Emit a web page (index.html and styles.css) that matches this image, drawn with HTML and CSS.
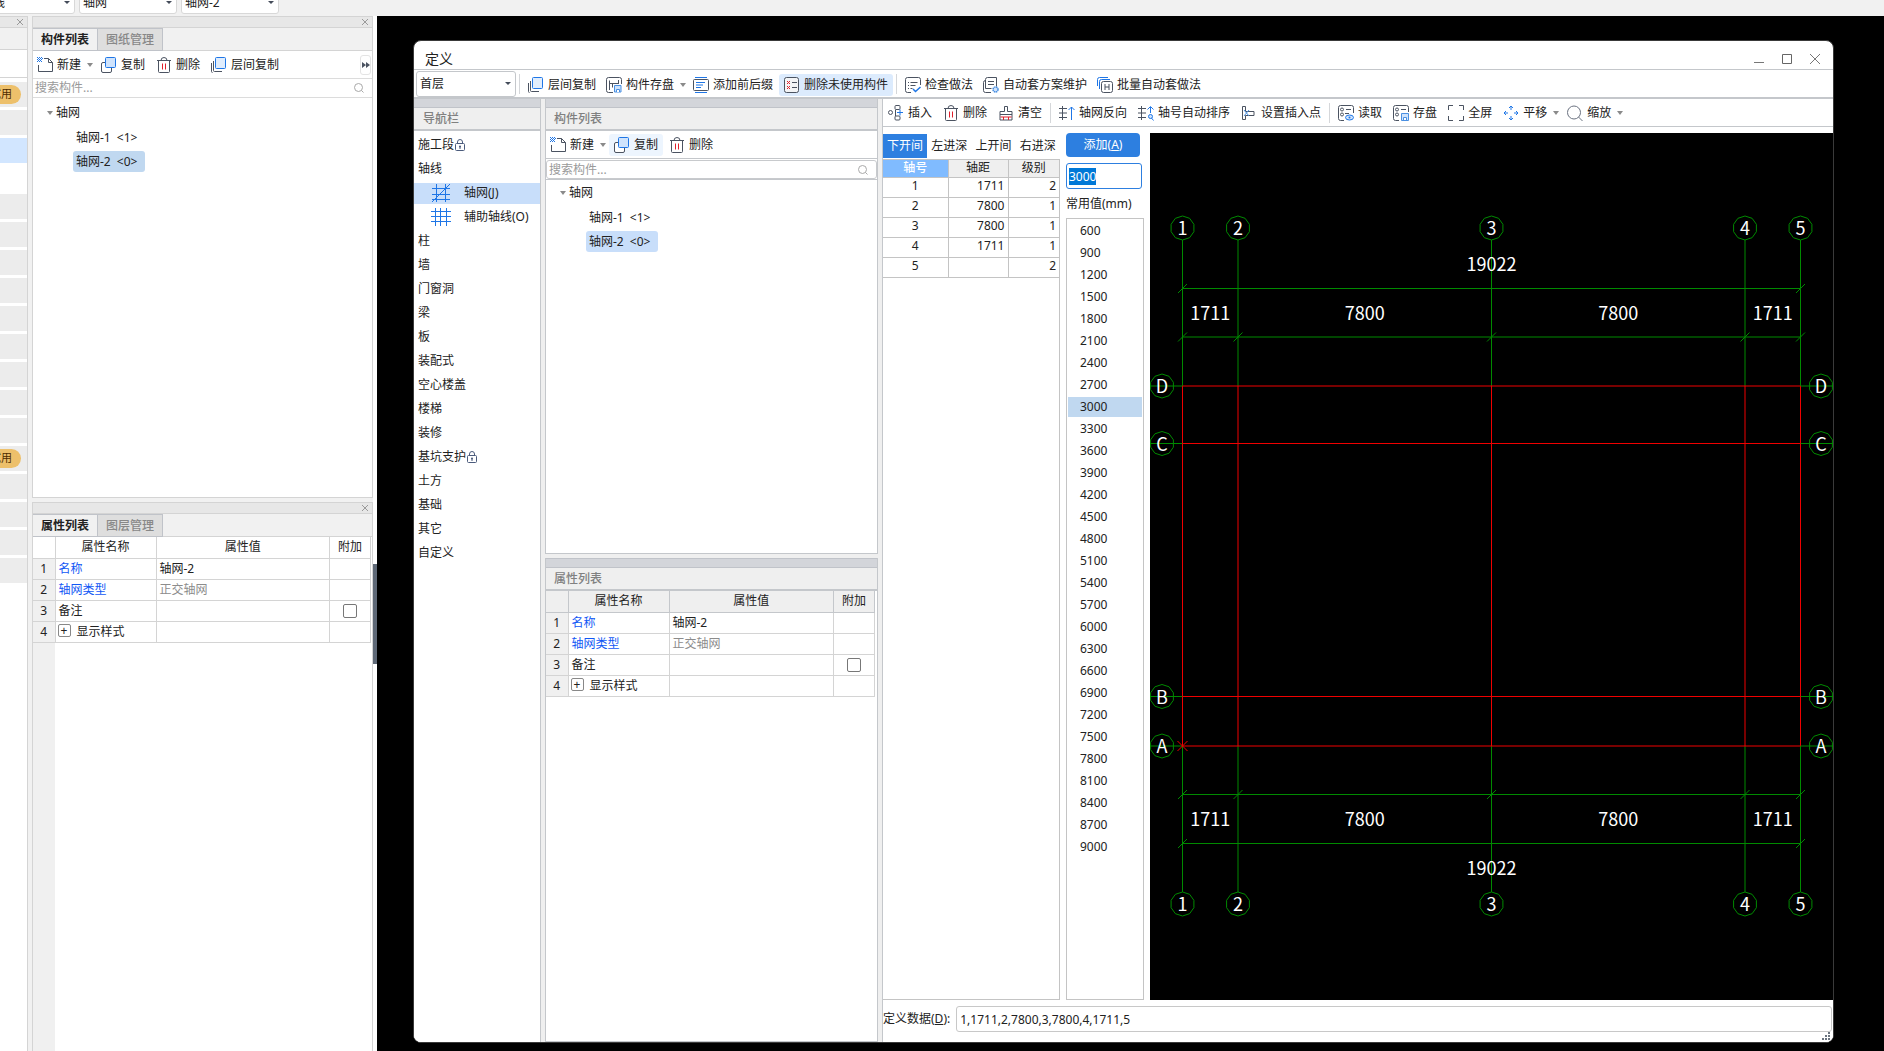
FILE: index.html
```html
<!DOCTYPE html>
<html lang="zh-CN">
<head>
  <meta charset="UTF-8" />
  <meta name="viewport" content="width=device-width, initial-scale=1.0"/>
  <title>定义</title>
  <link rel="stylesheet" href="styles.css">
</head>
<body>
  <!-- icon set -->
  <svg class="sprite" aria-hidden="true">
    <symbol id="i-new" viewBox="0 0 16 16">
      <path d="M7 1.5h4.5l4 4v9h-14V8M11.5 1.5v4h4" fill="none" stroke="#4b5361"/>
      <path d="M0 .5h5M0 2.500h5M0 4.500h5" stroke="#1f76e6" stroke-dasharray="1 1"/>
      <path d="M1 1.500h5M1 3.500h4" stroke="#1f76e6" stroke-dasharray="1 1"/>
    </symbol>
    <symbol id="i-copy" viewBox="0 0 16 16">
      <rect x=".5" y="5.500" width="10" height="10" rx="1.500" fill="#fff" stroke="#4b5361"/>
      <rect x="4.500" y=".5" width="10" height="10" rx="1" fill="#cfe3fc" stroke="#1f76e6"/>
    </symbol>
    <symbol id="i-layers" viewBox="0 0 16 16">
      <path d="M.5 6v8.500q0 1 1 1M2.500 4v9.500q0 1 1 1H11" fill="none" stroke="#4b5361"/>
      <rect x="4.500" y=".5" width="10" height="11" rx="1" fill="#e0edfd" stroke="#1f76e6"/>
    </symbol>
    <symbol id="i-del" viewBox="0 0 16 16">
      <path d="M1 3.500h14M2.500 3.500v11q0 1 1 1h9q1 0 1-1v-11M5 3.500q0-3 3-3t3 3" fill="none" stroke="#4b5361"/>
      <path d="M6.500 6.500v6M9.500 6.500v6" stroke="#e0202c"/>
    </symbol>
    <symbol id="i-save" viewBox="0 0 16 16">
      <path d="M7 15.500H2.500q-2 0-2-2v-11q0-2 2-2h11q2 0 2 2V7M3.500 13V3.500M3.500 6.500h9M12.500 3v4M6.500 6.500v4" fill="none" stroke="#4b5361"/>
      <path d="M8.500 8.500h6.500v6.500H8.500z" fill="#cfe3fc" stroke="#4a90e2"/>
      <path d="M10.500 15v-2.500h3V15" fill="#fff" stroke="#4a90e2"/>
    </symbol>
    <symbol id="i-affix" viewBox="0 0 16 16">
      <path d="M2 .5h12M2 15.500h12" stroke="#1f76e6"/>
      <rect x=".5" y="2.500" width="15" height="11" rx="1" fill="#fff" stroke="#4b5361"/>
      <path d="M3 5.500h9M3 8h7M3 10.500h5" stroke="#1f76e6"/>
    </symbol>
    <symbol id="i-unused" viewBox="0 0 16 16">
      <rect x=".5" y=".5" width="14" height="15" rx="2" fill="#f3f4f6" stroke="#4b5361"/>
      <path d="M3 4l3 3M6 4L3 7M3 9l3 3M6 9l-3 3" stroke="#e0202c"/>
      <path d="M8 5.500h5M8 10.500h5" stroke="#4b5361"/>
    </symbol>
    <symbol id="i-check" viewBox="0 0 16 16">
      <path d="M6 15.500H2.500q-2 0-2-2v-11q0-2 2-2h11q2 0 2 2V8M3 5.500h1M5.500 5.500h7M3 8.500h1M5.500 8.500h5M3 11.500h1M5.500 11.500h2" fill="none" stroke="#4b5361"/>
      <path d="M8 12l2.500 2.500L15.500 10" fill="none" stroke="#1f76e6" stroke-width="1.500"/>
    </symbol>
    <symbol id="i-plan" viewBox="0 0 16 16">
      <path d="M2.500 3.500q-2 0-2 2v8q0 2 2 2H8M2.500 11.500v-9q0-2 2-2h9v9" fill="none" stroke="#4b5361"/>
      <path d="M5 4.500h6M5 7.500h6M2.500 11.500h6" stroke="#4b5361"/>
      <circle cx="12.500" cy="12.500" r="2.500" fill="#cfe3fc" stroke="#4a90e2" stroke-dasharray="1.500 .5" stroke-width="1.500"/>
    </symbol>
    <symbol id="i-batch" viewBox="0 0 16 16">
      <path d="M.5 9V2.500q0-2 2-2H11M2.500 12V4.500q0-2 2-2H13" fill="none" stroke="#1f76e6"/>
      <rect x="4.500" y="4.500" width="11" height="11" rx="2" fill="#fff" stroke="#4b5361"/>
      <path d="M8 7v6M12 7v6M8 10h4" stroke="#4b5361"/>
    </symbol>
    <symbol id="i-insert" viewBox="0 0 16 16">
      <circle cx="2.500" cy="7.500" r="2" fill="none" stroke="#4b5361"/>
      <rect x="7" y=".5" width="5" height="4" rx="1" fill="none" stroke="#4b5361"/>
      <rect x="7" y="11" width="5" height="4" rx="1" fill="none" stroke="#4b5361"/>
      <path d="M7.500 5v6" stroke="#4b5361"/>
      <path d="M9 7.500h6M12 4.500v6" stroke="#1f76e6"/>
    </symbol>
    <symbol id="i-clear" viewBox="0 0 16 16">
      <path d="M6.500 6.500v-5h3v5h4.500v8.500H2V6.500zM2 9.500h12" fill="none" stroke="#4b5361"/>
      <path d="M2.500 12h11M5.500 12v3M10.500 12v3" stroke="#e0202c"/>
    </symbol>
    <symbol id="i-flip" viewBox="0 0 16 16">
      <path d="M3.500 1v14M0 3.500h8M0 8h8M0 12.500h8" stroke="#4b5361"/>
      <path d="M12.500 15V2M9.500 5l3-3 3 3" fill="none" stroke="#1f76e6"/>
    </symbol>
    <symbol id="i-sort" viewBox="0 0 16 16">
      <path d="M3.500 1v14M0 3.500h8M0 8h8M0 12.500h8" stroke="#4b5361"/>
      <path d="M12.500 8V2M9.500 4.500l3-3 3 3" fill="none" stroke="#1f76e6"/>
      <circle cx="12.500" cy="11.500" r="2" fill="#cfe3fc" stroke="#1f76e6"/>
      <path d="M13.500 13l2 2.500" stroke="#1f76e6"/>
    </symbol>
    <symbol id="i-point" viewBox="0 0 16 16">
      <path d="M1.500 1.500h3v5h8.500v4H4.500v4h-3z" fill="none" stroke="#4b5361"/>
      <path d="M3 5l5 6M8 5l-5 6" stroke="#4a90e2"/>
    </symbol>
    <symbol id="i-read" viewBox="0 0 16 16">
      <path d="M6 15.500H2.500q-2 0-2-2v-11q0-2 2-2h11q2 0 2 2V8M8 4.500h5M7 8.500h4" fill="none" stroke="#4b5361"/>
      <circle cx="4" cy="4.500" r="1.500" fill="none" stroke="#4b5361"/>
      <circle cx="4" cy="9.500" r="1.500" fill="none" stroke="#4b5361"/>
      <ellipse cx="11.500" cy="12.500" rx="4" ry="2.500" fill="#cfe3fc" stroke="#1f76e6"/>
      <circle cx="11.500" cy="12.500" r="1" fill="#1f76e6"/>
    </symbol>
    <symbol id="i-store" viewBox="0 0 16 16">
      <path d="M6 15.500H2.500q-2 0-2-2v-11q0-2 2-2h11q2 0 2 2V7M8 4.500h5" fill="none" stroke="#4b5361"/>
      <circle cx="4" cy="4.500" r="1.500" fill="none" stroke="#4b5361"/>
      <circle cx="4" cy="9.500" r="1.500" fill="none" stroke="#4b5361"/>
      <path d="M8.500 8.500h7v7h-7z" fill="#cfe3fc" stroke="#4a90e2"/>
      <path d="M10.500 15v-2.500h3V15" fill="#fff" stroke="#4a90e2"/>
    </symbol>
    <symbol id="i-full" viewBox="0 0 16 16">
      <path d="M.5 5V.5H5M11 .5h4.500V5M15.500 11v4.500H11M5 15.500H.5V11" fill="none" stroke="#4b5361"/>
    </symbol>
    <symbol id="i-pan" viewBox="0 0 16 16">
      <path d="M8 5V1M6 3l2-2 2 2M8 11v4M6 13l2 2 2-2M5 8H1M3 6L1 8l2 2M11 8h4M13 6l2 2-2 2" fill="none" stroke="#1f76e6"/>
    </symbol>
    <symbol id="i-zoom" viewBox="0 0 16 16">
      <circle cx="7" cy="7.500" r="6.500" fill="none" stroke="#6b7280"/>
      <path d="M11.500 12l4 4" stroke="#6b7280"/>
    </symbol>
    <symbol id="i-search" viewBox="0 0 10 10">
      <circle cx="4.500" cy="4.500" r="4" fill="none" stroke="#a8a8a8"/>
      <path d="M7.500 7.500l2 2" stroke="#a8a8a8"/>
    </symbol>
    <symbol id="i-close" viewBox="0 0 10 10">
      <path d="M2 2l6 6M8 2L2 8" stroke="#9a9a9a"/>
    </symbol>
    <symbol id="i-lock" viewBox="0 0 10 12">
      <rect x=".5" y="4.500" width="9" height="7" rx="1" fill="#fff" stroke="#4b5b7c"/>
      <path d="M2.500 4.500V3q0-2.500 2.500-2.500T7.500 3v1.500M5 7v3" fill="none" stroke="#4b5b7c"/>
      <circle cx="5" cy="7.500" r="1" fill="#4b5b7c"/>
    </symbol>
    <symbol id="i-grid" viewBox="0 0 20 20">
      <path d="M5.500 1v18M14.500 1v18M1 5.500h18M1 11.500h18M1 16.500h18M1 19L19 1" stroke="#1f76e6"/>
    </symbol>
    <symbol id="i-aux" viewBox="0 0 20 20">
      <path d="M4.500 1v18M9.500 1v18M15.500 1v18M0 4.500h20M0 9.500h20M0 14.500h20" stroke="#1f76e6"/>
    </symbol>
  </svg>

  <header class="topbar">
    <span class="combo"><select aria-label="构件类型"><option>轴线</option></select></span>
    <span class="combo"><select aria-label="构件"><option>轴网</option></select></span>
    <span class="combo"><select aria-label="构件名称"><option>轴网-2</option></select></span>
  </header>

  <div class="workspace">
    <!-- navigation, mostly scrolled off the left edge -->
    <aside class="strip">
      <div class="dock-head"><svg class="close"><use href="#i-close"/></svg></div>
      <div class="strip-tabs"></div>
      <div class="strip-tools"></div>
      <ul class="strip-rows">
        <li><span class="trial">试用</span></li>
        <li></li>
        <li class="active"></li>
        <li class="blank"></li>
        <li></li><li></li><li></li><li></li><li></li><li></li><li></li><li></li><li></li>
        <li><span class="trial">试用</span></li>
        <li></li><li></li><li></li><li></li>
      </ul>
    </aside>

    <div class="docks">
      <section class="dock dock-list">
        <div class="dock-head"><svg class="close"><use href="#i-close"/></svg></div>
        <div class="dock-tabs">
          <button class="current">构件列表</button>
          <button>图纸管理</button>
        </div>
        <div class="tools dock-tools">
          <button><svg><use href="#i-new"/></svg>新建<i class="caret"></i></button>
          <button><svg><use href="#i-copy"/></svg>复制</button>
          <button><svg><use href="#i-del"/></svg>删除</button>
          <button><svg><use href="#i-layers"/></svg>层间复制</button>
          <button class="more" aria-label="更多"><svg viewBox="0 0 8 6"><path d="M0 0l4 3-4 3zM4 0l4 3-4 3z" fill="#4b5361"/></svg></button>
        </div>
        <label class="search"><input type="text" placeholder="搜索构件..." aria-label="搜索构件"><svg><use href="#i-search"/></svg></label>
        <ul class="tree">
          <li>
            <div class="branch"><i class="caret"></i>轴网</div>
            <ul>
              <li><span class="leaf">轴网-1 <span>&lt;1&gt;</span></span></li>
              <li><span class="leaf selected">轴网-2 <span>&lt;0&gt;</span></span></li>
            </ul>
          </li>
        </ul>
      </section>

      <section class="dock dock-props">
        <div class="dock-head"><svg class="close"><use href="#i-close"/></svg></div>
        <div class="dock-tabs">
          <button class="current">属性列表</button>
          <button>图层管理</button>
        </div>
        <div class="props-wrap">
          <table class="props">
            <colgroup><col class="c-num"><col class="c-name"><col><col class="c-add"></colgroup>
            <tr><th></th><th>属性名称</th><th>属性值</th><th>附加</th></tr>
            <tr><td>1</td><td class="key">名称</td><td>轴网-2</td><td></td></tr>
            <tr><td>2</td><td class="key">轴网类型</td><td class="muted">正交轴网</td><td></td></tr>
            <tr><td>3</td><td>备注</td><td></td><td><input type="checkbox" aria-label="附加备注"></td></tr>
            <tr><td>4</td><td><button class="plus" aria-label="展开">+</button>显示样式</td><td></td><td></td></tr>
          </table>
        </div>
      </section>
    </div>
    <div class="gutter"><button aria-label="折叠"></button></div>

    <main class="stage">
      <div class="dialog">
        <div class="titlebar">
          <h1>定义</h1>
          <button aria-label="最小化"><svg viewBox="0 0 12 12"><path d="M1 9.500h10" stroke="#777"/></svg></button>
          <button aria-label="最大化"><svg viewBox="0 0 12 12"><path d="M1.500 1.500h9v9h-9z" fill="none" stroke="#666"/></svg></button>
          <button aria-label="关闭"><svg viewBox="0 0 12 12"><path d="M1 1l10 10M11 1L1 11" stroke="#777"/></svg></button>
        </div>

        <div class="tools main-tools">
          <span class="combo"><select aria-label="楼层"><option>首层</option></select></span>
          <i class="sep"></i>
          <button><svg><use href="#i-layers"/></svg>层间复制</button>
          <button><svg><use href="#i-save"/></svg>构件存盘<i class="caret"></i></button>
          <button><svg><use href="#i-affix"/></svg>添加前后缀</button>
          <button class="hot"><svg><use href="#i-unused"/></svg>删除未使用构件</button>
          <i class="sep"></i>
          <button><svg><use href="#i-check"/></svg>检查做法</button>
          <button><svg><use href="#i-plan"/></svg>自动套方案维护</button>
          <button><svg><use href="#i-batch"/></svg>批量自动套做法</button>
        </div>

        <div class="dialog-body">
          <nav class="panel nav">
            <div class="grip"></div>
            <h2>导航栏</h2>
            <ul>
              <li><a href="#">施工段<svg class="lock"><use href="#i-lock"/></svg></a></li>
              <li><a href="#">轴线</a></li>
              <li><a href="#" class="sub selected"><svg><use href="#i-grid"/></svg>轴网(J)</a></li>
              <li><a href="#" class="sub"><svg><use href="#i-aux"/></svg>辅助轴线(O)</a></li>
              <li><a href="#">柱</a></li>
              <li><a href="#">墙</a></li>
              <li><a href="#">门窗洞</a></li>
              <li><a href="#">梁</a></li>
              <li><a href="#">板</a></li>
              <li><a href="#">装配式</a></li>
              <li><a href="#">空心楼盖</a></li>
              <li><a href="#">楼梯</a></li>
              <li><a href="#">装修</a></li>
              <li><a href="#">基坑支护<svg class="lock"><use href="#i-lock"/></svg></a></li>
              <li><a href="#">土方</a></li>
              <li><a href="#">基础</a></li>
              <li><a href="#">其它</a></li>
              <li><a href="#">自定义</a></li>
            </ul>
          </nav>

          <div class="middle">
            <section class="panel list-panel">
              <div class="grip"></div>
              <h2>构件列表</h2>
              <div class="tools list-tools">
                <button><svg><use href="#i-new"/></svg>新建<i class="caret"></i></button>
                <button class="hover"><svg><use href="#i-copy"/></svg>复制</button>
                <button><svg><use href="#i-del"/></svg>删除</button>
              </div>
              <label class="search boxed"><input type="text" placeholder="搜索构件..." aria-label="搜索构件"><svg><use href="#i-search"/></svg></label>
              <ul class="tree">
                <li>
                  <div class="branch"><i class="caret"></i>轴网</div>
                  <ul>
                    <li><span class="leaf">轴网-1 <span>&lt;1&gt;</span></span></li>
                    <li><span class="leaf selected">轴网-2 <span>&lt;0&gt;</span></span></li>
                  </ul>
                </li>
              </ul>
            </section>

            <section class="panel props-panel">
              <div class="grip"></div>
              <h2>属性列表</h2>
              <table class="props">
                <colgroup><col class="c-num"><col class="c-name"><col><col class="c-add"></colgroup>
                <tr><th></th><th>属性名称</th><th>属性值</th><th>附加</th></tr>
                <tr><td>1</td><td class="key">名称</td><td>轴网-2</td><td></td></tr>
                <tr><td>2</td><td class="key">轴网类型</td><td class="muted">正交轴网</td><td></td></tr>
                <tr><td>3</td><td>备注</td><td></td><td><input type="checkbox" aria-label="附加备注"></td></tr>
                <tr><td>4</td><td><button class="plus" aria-label="展开">+</button>显示样式</td><td></td><td></td></tr>
              </table>
            </section>
          </div>

          <section class="editor">
            <div class="tools editor-tools">
              <button><svg><use href="#i-insert"/></svg>插入</button>
              <button><svg><use href="#i-del"/></svg>删除</button>
              <button><svg><use href="#i-clear"/></svg>清空</button>
              <i class="sep"></i>
              <button><svg><use href="#i-flip"/></svg>轴网反向</button>
              <button><svg><use href="#i-sort"/></svg>轴号自动排序</button>
              <button><svg><use href="#i-point"/></svg>设置插入点</button>
              <i class="sep"></i>
              <button><svg><use href="#i-read"/></svg>读取</button>
              <button><svg><use href="#i-store"/></svg>存盘</button>
              <button><svg><use href="#i-full"/></svg>全屏</button>
              <button><svg><use href="#i-pan"/></svg>平移<i class="caret"></i></button>
              <button><svg><use href="#i-zoom"/></svg>缩放<i class="caret"></i></button>
            </div>

            <div class="editor-main">
              <div class="spans">
                <div class="span-tabs">
                  <button class="current">下开间</button>
                  <button>左进深</button>
                  <button>上开间</button>
                  <button>右进深</button>
                </div>
                <div class="span-box">
                  <table>
                    <colgroup><col class="c-axis"><col class="c-dist"><col></colgroup>
                    <tr><th class="picked">轴号</th><th>轴距</th><th>级别</th></tr>
                    <tr><td>1</td><td>1711</td><td>2</td></tr>
                    <tr><td>2</td><td>7800</td><td>1</td></tr>
                    <tr><td>3</td><td>7800</td><td>1</td></tr>
                    <tr><td>4</td><td>1711</td><td>1</td></tr>
                    <tr><td>5</td><td></td><td>2</td></tr>
                  </table>
                </div>
              </div>

              <div class="values">
                <button class="add">添加(<u>A</u>)</button>
                <input type="text" id="spanValue" value="3000" aria-label="轴距">
                <p>常用值(mm)</p>
                <ul id="valueList"></ul>
              </div>

              <div class="drawing">
                <svg viewBox="0 0 683 866" preserveAspectRatio="xMinYMin" id="axisGrid"></svg>
              </div>
            </div>

            <div class="data-row">
              <label for="spanData">定义数据(<u>D</u>):</label>
              <input type="text" id="spanData" value="1,1711,2,7800,3,7800,4,1711,5">
              <svg class="resize" viewBox="0 0 8 8"><path d="M6 1h2M3 4h2M6 4h2M0 7h2M3 7h2M6 7h2" stroke="#6b7480" stroke-width="2"/></svg>
            </div>
          </section>
        </div>
      </div>
    </main>
  </div>

  <script>
    const valueList = document.getElementById('valueList');
    const spanValue = document.getElementById('spanValue');
    const axisGrid = document.getElementById('axisGrid');

    // 600 to 9000 in steps of 300
    for (let v = 600; v <= 9000; v += 300) {
      const item = document.createElement('li');
      item.textContent = v;
      if (v === 3000) item.className = 'selected';
      valueList.appendChild(item);
    }

    const columns = [32.5, 88, 341.5, 595, 650.5];
    const rows = [
      { name: 'D', y: 253 },
      { name: 'C', y: 310.5 },
      { name: 'B', y: 563.5 },
      { name: 'A', y: 613 }
    ];
    const spans = ['1711', '7800', '7800', '1711'];
    const xMin = columns[0];
    const xMax = columns[4];
    const yMin = rows[0].y;
    const yMax = rows[3].y;

    function line(x1, y1, x2, y2, cls) {
      return `<line x1="${x1}" y1="${y1}" x2="${x2}" y2="${y2}" class="${cls}"/>`;
    }

    function label(x, y, text) {
      return `<text x="${x}" y="${y}">${text}</text>`;
    }

    function bubble(x, y, text) {
      const points = [];
      for (let i = 0; i < 10; i++) {
        const a = Math.PI * i / 5 + Math.PI / 2;
        points.push((x + 12 * Math.cos(a)).toFixed(1) + ',' + (y - 12 * Math.sin(a)).toFixed(1));
      }
      return `<polygon points="${points.join(' ')}" class="axis"/>` + label(x, y + 7, text);
    }

    function dimension(y, xs) {
      let out = line(xMin, y, xMax, y, 'axis');
      xs.forEach(x => {
        out += line(x - 4.5, y + 4.5, x + 4.5, y - 4.5, 'axis');
      });
      return out;
    }

    function drawGrid() {
      let out = '';
      columns.forEach((x, i) => {
        out += line(x, 107, x, yMin, 'axis');
        out += line(x, yMax, x, 759, 'axis');
        out += line(x, yMin, x, yMax, 'grid');
        out += bubble(x, 95, i + 1) + bubble(x, 771, i + 1);
      });
      rows.forEach(r => {
        out += line(0, r.y, xMin, r.y, 'axis');
        out += line(xMax, r.y, 683, r.y, 'axis');
        out += line(xMin, r.y, xMax, r.y, 'grid');
        out += bubble(12, r.y, r.name) + bubble(671, r.y, r.name);
      });
      out += dimension(155.5, [xMin, xMax]) + dimension(204, columns);
      out += dimension(661.5, columns) + dimension(710.5, [xMin, xMax]);
      out += label(341.5, 138, '19022') + label(341.5, 742, '19022');
      spans.forEach((s, i) => {
        const x = (columns[i] + columns[i + 1]) / 2;
        out += label(x, 187, s) + label(x, 693, s);
      });
      // insertion point
      out += line(xMin - 5, yMax - 5, xMin + 5, yMax + 5, 'grid');
      out += line(xMin - 5, yMax + 5, xMin + 5, yMax - 5, 'grid');
      axisGrid.innerHTML = out;
    }

    drawGrid();
    spanValue.focus();
    spanValue.select();
  </script>
</body>
</html>
```
FILE: styles.css
```css
* {
  box-sizing: border-box;
}

body {
  margin: 0;
  height: 100vh;
  display: flex;
  flex-direction: column;
  overflow: hidden;
  background: #f1f1f1;
  color: #222;
  font-family: "Noto Sans", "Noto Sans CJK SC", sans-serif;
  font-size: 12px;
  line-height: 16px;
}

ul {
  list-style: none;
  margin: 0;
  padding: 0;
}

h1, h2, p {
  margin: 0;
  font-weight: normal;
}

button, input, select {
  font: inherit;
  color: inherit;
  margin: 0;
  padding: 0;
  border: none;
  background: none;
  outline: none;
}

a {
  color: inherit;
  text-decoration: none;
}

.sprite {
  position: absolute;
  width: 0;
  height: 0;
}

.caret {
  flex: none;
  border: 3px solid transparent;
  border-top: 4px solid #8a8a8a;
  border-bottom: none;
}

.sep {
  flex: none;
  width: 1px;
  height: 20px;
  margin: 0 3px;
  background: #d5d7da;
}

/* drop-downs */
.combo {
  position: relative;
  flex: none;
  width: 98px;
  height: 22px;
}

.combo select {
  appearance: none;
  width: 100%;
  height: 100%;
  padding: 0 18px 0 3px;
  border: 1px solid #d8d8d8;
  border-radius: 3px;
  background: #fff;
}

.combo::after {
  content: "";
  position: absolute;
  right: 5px;
  top: 50%;
  margin-top: -2px;
  border: 3px solid transparent;
  border-top: 3px solid #444c5a;
  border-bottom: none;
}

.topbar {
  flex: none;
  display: flex;
  align-items: flex-end;
  gap: 4px;
  height: 16px;
  padding-bottom: 2px;
  margin-left: -23px;
}

.workspace {
  flex: 1;
  display: flex;
  min-height: 0;
}

/* left strip */
.strip {
  flex: none;
  width: 28px;
  background: #fff;
  border-right: 1px solid #d4d4d4;
}

.dock-head {
  display: flex;
  align-items: center;
  justify-content: flex-end;
  height: 12px;
  padding-right: 2px;
  background: #e7e7e7;
  border-top: 1px solid #d4d4d4;
  border-bottom: 1px solid #d4d4d4;
}

.close {
  width: 10px;
  height: 10px;
}

.strip-tabs {
  height: 22px;
  background: #f1f1f1;
  border-bottom: 1px solid #d4d4d4;
}

.strip-tools {
  height: 28px;
  border-bottom: 1px solid #d4d4d4;
}

.strip-rows {
  display: flex;
  flex-direction: column;
  gap: 3px;
  padding-top: 4px;
}

.strip-rows li {
  display: flex;
  align-items: center;
  justify-content: flex-end;
  height: 25px;
  padding-right: 6px;
  background: #ececec;
}

.strip-rows .active {
  background: #d2e6ff;
}

.strip-rows .blank {
  background: none;
}

.trial {
  flex: none;
  padding: 1px 9px 2px;
  border-radius: 10px;
  background: #edc06b;
  color: #4d2c00;
  font-size: 11px;
}

/* docked panels */
.docks {
  flex: none;
  width: 345px;
  padding-left: 4px;
  display: flex;
  flex-direction: column;
  gap: 4px;
}

.dock {
  display: flex;
  flex-direction: column;
  background: #fff;
  border: 1px solid #d4d4d4;
  border-top: none;
}

.dock-list {
  flex: 0 1 482px;
}

.dock-props {
  flex: 1;
  border-bottom: none;
}

.dock-tabs {
  flex: none;
  display: flex;
  height: 23px;
  background: #f1f1f1;
  border-bottom: 1px solid #d4d4d4;
}

.dock-tabs button {
  width: 65px;
  height: 23px;
  border: 1px solid #c0c3c9;
  border-left: none;
  background: #dedede;
  color: #888;
  font-weight: 500;
}

.dock-tabs .current {
  background: #f1f1f1;
  color: #222;
  font-weight: bold;
}

.tools {
  flex: none;
  display: flex;
  align-items: center;
  gap: 1px;
}

.tools button {
  flex: none;
  display: flex;
  align-items: center;
  gap: 4px;
  height: 22px;
  padding: 0 5px;
  border-radius: 3px;
  white-space: nowrap;
}

.tools button svg {
  width: 16px;
  height: 16px;
}

.tools button .caret {
  margin: 0 -3px 0 2px;
}

.dock-tools {
  height: 28px;
  padding-right: 1px;
  border-bottom: 1px solid #dcdcdc;
}

.dock-tools button:first-child {
  padding-left: 4px;
}

.dock-tools button.more {
  width: 11px;
  height: 20px;
  margin-left: auto;
  justify-content: center;
  border: 1px solid #e4e4e4;
  padding: 0;
}

.tools .more svg {
  width: 8px;
  height: 6px;
}

.search {
  flex: none;
  display: flex;
  align-items: center;
  height: 19px;
  padding: 0 8px 0 2px;
  border-bottom: 1px solid #dcdcdc;
}

.search input {
  flex: 1;
  min-width: 0;
}

.search input::placeholder {
  color: #9a9a9a;
}

.search svg {
  width: 10px;
  height: 10px;
}

.search.boxed {
  margin-top: 1px;
  border: 1px solid #c8cacd;
  border-radius: 3px;
}

.tree {
  padding: 3px 0 0 14px;
}

.branch,
.tree li li {
  display: flex;
  align-items: center;
  height: 24px;
}

.tree .caret {
  margin-right: 3px;
}

.tree li li {
  padding-left: 26px;
}

.leaf {
  min-width: 72px;
  height: 21px;
  padding-left: 3px;
  border-radius: 3px;
  line-height: 21px;
}

.leaf span {
  margin-left: 3px;
}

.tree .selected {
  background: #c0d8f0;
}

.dialog .tree .selected {
  background: #c8defa;
}

/* property tables */
.props-wrap {
  flex: 1;
  padding-right: 1px;
  background: linear-gradient(to right, #f0f0f0 22px, #fff 22px);
}

.props {
  width: 100%;
  table-layout: fixed;
  border-collapse: collapse;
}

.c-num {
  width: 22px;
}

.c-name {
  width: 101px;
}

.c-add {
  width: 41px;
}

.props th,
.props td {
  height: 21px;
  padding: 0 3px;
  border: 1px solid #d4d4d4;
  background: #fff;
  text-align: left;
  font-weight: normal;
  white-space: nowrap;
}

.props th,
.props td:first-child,
.props td:last-child {
  text-align: center;
}

.props td:first-child {
  background: #f0f0f0;
}

.props tr > :first-child {
  border-left: none;
}

.props tr:first-child > * {
  border-top: none;
}

.props .key {
  color: #1258f5;
}

.props .muted {
  color: #8c8c8c;
}

.props input {
  appearance: none;
  display: block;
  width: 14px;
  height: 14px;
  margin: 0 auto;
  border: 1px solid #777;
  border-radius: 2px;
}

.plus {
  width: 13px;
  height: 13px;
  margin-right: 6px;
  margin-left: -1px;
  border: 1px solid #888;
  border-radius: 2px;
  line-height: 11px;
  vertical-align: 1px;
}

.gutter {
  flex: none;
  width: 4px;
  background: #fff;
}

.gutter button {
  display: block;
  width: 4px;
  height: 100px;
  margin-top: 548px;
  background: #5f6977;
}

/* definition window */
.stage {
  flex: 1;
  min-width: 0;
  display: flex;
  padding: 24px 50px 8px 36px;
  background: #000;
}

.dialog {
  flex: 1;
  min-width: 0;
  display: flex;
  flex-direction: column;
  overflow: hidden;
  background: #fff;
  border: 1px solid #3a3a3a;
  border-radius: 8px;
}

.titlebar {
  flex: none;
  display: flex;
  align-items: center;
  height: 29px;
  padding: 8px 12px 0 11px;
  border-bottom: 1px solid #c4c7cb;
}

.titlebar h1 {
  flex: 1;
  font-size: 14px;
}

.titlebar button {
  display: flex;
  margin-left: 16px;
}

.titlebar svg {
  width: 12px;
  height: 12px;
}

.main-tools {
  height: 29px;
  gap: 0;
  padding-left: 2px;
  border-bottom: 2px solid #c4c7cb;
}

.main-tools button {
  margin-top: 2px;
}

.main-tools .combo {
  width: 100px;
  height: 26px;
}

.main-tools .combo select {
  border-color: #c4c7cb;
}

.tools .hot {
  margin-left: 1px;
  background: #dcebfd;
}

.tools .hover {
  background: #edf5fe;
}

.dialog-body {
  flex: 1;
  min-height: 0;
  display: flex;
  gap: 4px;
  background: #efefef;
}

.panel {
  display: flex;
  flex-direction: column;
  background: #fff;
  border-right: 1px solid #c4c7cb;
}

.grip {
  flex: none;
  height: 9px;
  background: #d3d5da;
  border-bottom: 1px solid #c0c3c9;
}

.panel h2 {
  flex: none;
  height: 23px;
  padding: 0 9px;
  background: #efefef;
  border-bottom: 2px solid #c4c7cb;
  color: #808080;
  font-size: 12px;
  font-weight: 500;
  line-height: 21px;
}

.nav {
  flex: none;
  width: 127px;
}

.nav ul {
  padding-top: 2px;
}

.nav li {
  display: flex;
  align-items: center;
  height: 24px;
}

.nav a {
  flex: 1;
  display: flex;
  align-items: center;
  height: 21px;
  padding-left: 4px;
}

.nav .sub {
  gap: 13px;
  padding-left: 17px;
}

.nav .sub svg {
  width: 20px;
  height: 20px;
}

.nav .selected {
  background: #c8defa;
}

.nav .lock {
  width: 10px;
  height: 12px;
  margin-left: 1px;
}

.middle {
  flex: none;
  width: 333px;
  display: flex;
  flex-direction: column;
  gap: 4px;
}

.middle .panel {
  border-left: 1px solid #c4c7cb;
  border-bottom: 1px solid #c4c7cb;
}

.middle .panel h2 {
  padding-left: 8px;
}

.list-panel {
  flex: 0 1 455px;
}

.props-panel {
  flex: 1;
}

.props-panel .grip {
  height: 10px;
  border-top: 1px solid #c0c3c9;
}

.props-panel .props {
  width: auto;
  margin-right: 2px;
}

.props-panel .props th {
  background: #efefef;
  border-color: #c4c7cb;
}

.list-tools {
  height: 28px;
  padding-top: 1px;
  border-bottom: 1px solid #c4c7cb;
}

.list-tools button:first-child {
  padding-left: 4px;
}

.list-panel .tree {
  padding-top: 1px;
  border-top: 1px solid #c4c7cb;
}

.editor {
  flex: 1;
  min-width: 0;
  display: flex;
  flex-direction: column;
  background: #fff;
  border-left: 1px solid #c4c7cb;
}

.editor-tools {
  height: 28px;
  padding-top: 1px;
  border-bottom: 1px solid #c4c7cb;
}

.editor-tools .sep {
  margin: 0 2px;
}

.editor-main {
  flex: 1;
  min-height: 0;
  display: flex;
  gap: 6px;
  padding-top: 6px;
}

.spans {
  flex: none;
  width: 177px;
  display: flex;
  flex-direction: column;
}

.span-tabs {
  display: flex;
  height: 26px;
  padding-top: 1px;
}

.span-tabs button {
  flex: 1;
  height: 24px;
}

.span-tabs .current {
  background: #2d7fe0;
  color: #fff;
}

.span-box {
  flex: 1;
  border: 1px solid #c4c4c4;
  border-left: none;
}

.span-box table {
  width: 100%;
  table-layout: fixed;
  border-collapse: collapse;
}

.c-axis {
  width: 65px;
}

.c-dist {
  width: 60px;
}

.span-box th {
  height: 17px;
  padding: 0;
  background: #efefef;
  border: 1px solid #c4c4c4;
  border-top: none;
  font-weight: normal;
}

.span-box td {
  height: 20px;
  padding: 0 3px 2px;
  border: 1px solid #c4c4c4;
  text-align: right;
}

.span-box tr > :first-child {
  border-left: none;
  text-align: center;
}

.span-box tr > :last-child {
  border-right: none;
}

.span-box .picked {
  background: #80bbff;
  color: #fff;
  font-weight: 500;
}

.values {
  flex: none;
  width: 78px;
  display: flex;
  flex-direction: column;
}

.values .add {
  flex: none;
  width: 74px;
  height: 24px;
  border-radius: 4px;
  background: #2d7fe0;
  color: #fff;
}

.values input {
  flex: none;
  width: 76px;
  height: 26px;
  margin-top: 6px;
  padding: 0 2px;
  border: 1px solid #2d7fe0;
  border-radius: 3px;
}

.values input::selection {
  background: #0078d7;
  color: #fff;
}

.values p {
  margin: 7px 0 6px;
}

.values ul {
  flex: 1;
  min-height: 0;
  overflow: hidden;
  display: flex;
  flex-direction: column;
  gap: 2px;
  padding: 2px 1px;
  border: 1px solid #c4c4c4;
}

.values li {
  flex: none;
  height: 20px;
  padding-left: 12px;
  line-height: 20px;
}

.values .selected {
  background: #c0d8f0;
}

/* axis preview */
.drawing {
  flex: 1;
  min-width: 0;
  background: #000;
}

.drawing svg {
  display: block;
  width: 100%;
  height: 100%;
}

.drawing .axis {
  fill: none;
  stroke: #008a00;
}

.drawing .grid {
  stroke: #f00000;
}

.drawing text {
  fill: #fff;
  font-family: "Noto Sans CJK SC", sans-serif;
  font-size: 18px;
  text-anchor: middle;
}

.data-row {
  position: relative;
  flex: none;
  display: flex;
  align-items: center;
  gap: 6px;
  height: 42px;
  padding: 0 1px 4px 0;
}

.data-row input {
  flex: 1;
  min-width: 0;
  height: 26px;
  padding: 0 3px;
  border: 1px solid #c8c8c8;
  border-radius: 3px;
}

.resize {
  position: absolute;
  right: 3px;
  bottom: 2px;
  width: 8px;
  height: 8px;
}
```
